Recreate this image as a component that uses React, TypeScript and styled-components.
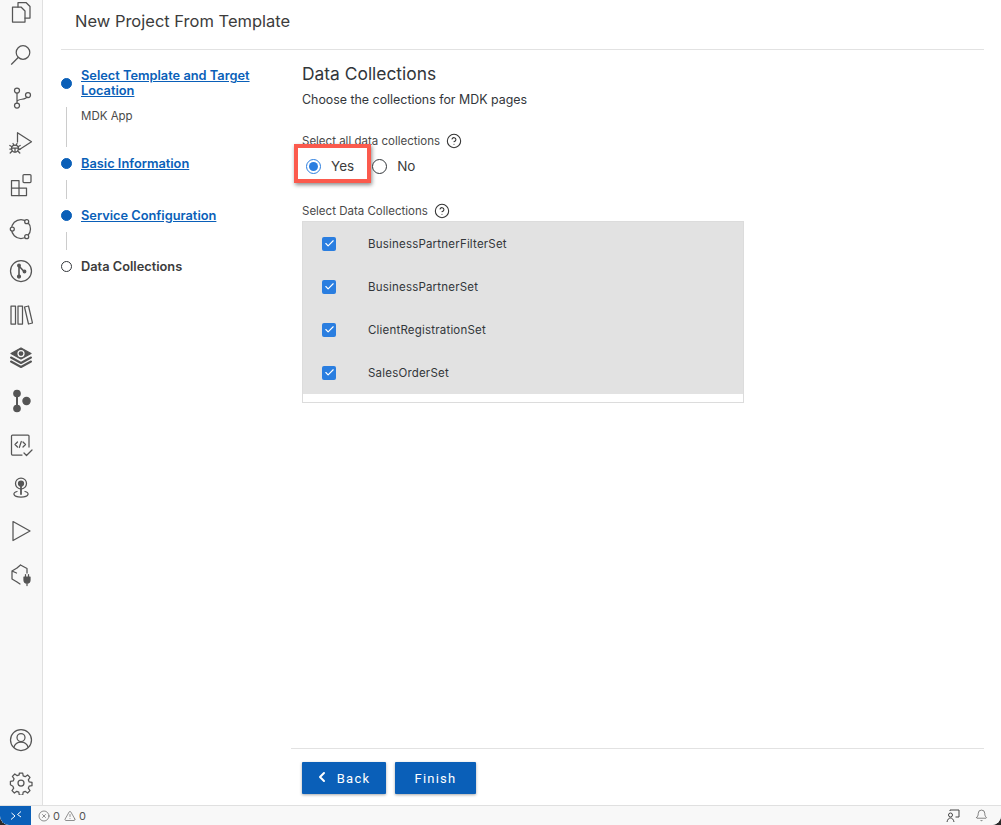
import React from 'react'
import styled, { createGlobalStyle } from 'styled-components'
import { ChevronLeft, Check, Bell, CircleHelp, CircleX, TriangleAlert } from 'lucide-react'

const GlobalStyle = createGlobalStyle`
  html, body {
    margin: 0;
    height: 100%;
    background: #2a2a2a;
  }
  #root { height: 100%; }
  * { box-sizing: border-box; }
`

const Page = styled.div`
  height: 100vh;
  display: flex;
  flex-direction: column;
  background: #fff;
  border-radius: 0 0 9px 9px;
  overflow: hidden;
  font-family: Inter, "Liberation Sans", sans-serif;
  color: #32363a;
`
const Body = styled.div`
  flex: 1;
  display: flex;
  min-height: 0;
`
const ActivityBar = styled.nav`
  width: 43px;
  flex-shrink: 0;
  background: #f8f8f8;
  border-right: 1px solid #e0e0e0;
  display: flex;
  flex-direction: column;
  justify-content: space-between;
  overflow: hidden;
`
const IconGroup = styled.div<{ $shift?: number }>`
  display: flex;
  flex-direction: column;
  margin-top: ${(p) => p.$shift || 0}px;
`
const BarIcon = styled.div`
  height: 43.3px;
  display: flex;
  align-items: center;
  justify-content: center;
  color: #555;

  svg {
    width: 24px;
    height: 24px;
    fill: none;
    stroke: currentColor;
    stroke-width: 1.25;
    stroke-linejoin: round;
    stroke-linecap: round;
  }
`
const Main = styled.main`
  flex: 1;
  min-width: 0;
  display: flex;
  flex-direction: column;
  padding: 0 17px 0 18px;
`
const Header = styled.header`
  height: 50px;
  flex-shrink: 0;
  border-bottom: 1px solid #e2e2e2;
  padding: 12px 0 0 14px;
  font-size: 16.5px;
  line-height: 19px;
  color: #3c3c3c;
`
const Columns = styled.div`
  flex: 1;
  min-height: 0;
  display: flex;
`
const Steps = styled.ol`
  width: 230px;
  flex-shrink: 0;
  margin: 0;
  padding: 18px 22px 0 0;
  list-style: none;
  font-size: 12.8px;
  line-height: 15px;
`
const StepRow = styled.li`
  display: flex;
  align-items: center;
  gap: 9px;
`
const Dot = styled.span<{ $done?: boolean }>`
  width: 11px;
  height: 11px;
  flex-shrink: 0;
  border-radius: 50%;
  background: ${(p) => (p.$done ? '#0a5fb8' : '#fff')};
  border: 1px solid ${(p) => (p.$done ? '#0a5fb8' : '#32363a')};
`
const StepLink = styled.a`
  font-weight: 600;
  color: #0a5fb8;
  text-decoration: underline;
`
const StepCurrent = styled.span`
  font-weight: 600;
  color: #3c3c3c;
`
const Connector = styled.div<{ $height: number }>`
  height: ${(p) => p.$height}px;
  margin: 9px 0 9px 5px;
  padding: 2px 0 0 14px;
  border-left: 1px solid #ccc;
  font-size: 11.5px;
  color: #4a4a4a;
`
const Panel = styled.section`
  flex: 1;
  min-width: 0;
  display: flex;
  flex-direction: column;
`
const PanelBody = styled.div`
  flex: 1;
  padding: 13px 0 0 11px;
`
const Title = styled.h2`
  margin: 0;
  font-size: 17.4px;
  line-height: 22px;
  font-weight: 400;
  color: #32363a;
`
const Subtitle = styled.p`
  margin: 7px 0 0;
  font-size: 12.4px;
  line-height: 15px;
  color: #32363a;
`
const FieldLabel = styled.div<{ $top: number }>`
  display: flex;
  align-items: center;
  gap: 6px;
  margin-top: ${(p) => p.$top}px;
  height: 16px;
  font-size: 11.5px;
  color: #4a4a4a;

  svg {
    width: 16px;
    height: 16px;
    color: #333;
  }
`
const RadioGroup = styled.div`
  display: flex;
  height: 26px;
  margin-top: 4px;
  padding-left: 4px;
  gap: 18px;
  align-items: center;
`
const RadioOption = styled.label`
  position: relative;
  display: flex;
  align-items: center;
  gap: 10px;
  font-size: 13.5px;
  color: #3c3c3c;
`
const RadioMark = styled.span<{ $on?: boolean }>`
  width: 15px;
  height: 15px;
  border-radius: 50%;
  background: #fff;
  border: ${(p) => (p.$on ? '1.5px solid #2a7ee0' : '1.5px solid #32363a')};
  display: flex;
  align-items: center;
  justify-content: center;

  &::after {
    content: '';
    display: ${(p) => (p.$on ? 'block' : 'none')};
    width: 9px;
    height: 9px;
    border-radius: 50%;
    background: #2a7ee0;
  }
`
const Highlight = styled.span`
  position: absolute;
  left: -12px;
  right: -17px;
  top: -14px;
  bottom: -9px;
  border: 4px solid #fb5a4d;
  box-shadow: 1px 2px 4px rgba(0, 0, 0, 0.45);
  pointer-events: none;
`
const ListBox = styled.div`
  width: 442px;
  height: 182px;
  margin-top: 2px;
  border: 1px solid #dcdcdc;
  background: #fff;
`
const ListRow = styled.div`
  height: 43px;
  display: flex;
  align-items: center;
  padding-left: 19px;
  background: #e2e2e2;
  font-size: 11.5px;
  letter-spacing: 0.2px;
  color: #32363a;
`
const CheckMark = styled.span`
  width: 14px;
  height: 14px;
  margin-right: 32px;
  border-radius: 2px;
  background: #2a7ee0;
  color: #fff;
  display: flex;
  align-items: center;
  justify-content: center;
`
const Footer = styled.footer`
  height: 57px;
  flex-shrink: 0;
  border-top: 1px solid #e2e2e2;
  padding: 13px 0 0 11px;
  display: flex;
  align-items: flex-start;
  gap: 9px;
`
const Button = styled.button<{ $width: number }>`
  width: ${(p) => p.$width}px;
  height: 32px;
  border: 0;
  border-radius: 1px;
  background: #0a5fb8;
  color: #fff;
  font-family: Roboto, "Liberation Sans", sans-serif;
  font-size: 13px;
  letter-spacing: 1.2px;
  display: flex;
  align-items: center;
  justify-content: center;
  gap: 7px;
  padding: 0;
  box-shadow: 0 1px 3px rgba(0, 0, 0, 0.35);
`
const BackIcon = styled(ChevronLeft)`
  margin: -3px 0 0 -4px;
`
const StatusBar = styled.footer`
  height: 20px;
  flex-shrink: 0;
  background: #f8f8f8;
  border-top: 1px solid #e0e0e0;
  display: flex;
  align-items: center;
  font-size: 11px;
  color: #555;
`
const RemoteBadge = styled.div`
  width: 31px;
  height: 100%;
  background: #0a5fb8;
  color: #fff;
  display: flex;
  align-items: center;
  justify-content: center;
  margin-right: 7px;
`
const StatusItem = styled.span`
  display: flex;
  align-items: center;
  gap: 3px;
  margin-right: 4px;
`
const StatusRight = styled.div`
  margin-left: auto;
  display: flex;
  align-items: center;
  gap: 15px;
  padding-right: 13px;
  color: #444;
`

const topIcons = [
  <svg viewBox="0 0 24 24"><path d="M9 7V2.500h8L21 6.500v11.500h-5" /><path d="M3.500 7H12l4 4v11H3.500z" /></svg>,
  <svg viewBox="0 0 24 24"><circle cx="14" cy="9.500" r="6.800" /><path d="M9.200 14.500 2.500 21.200" /></svg>,
  <svg viewBox="0 0 24 24"><circle cx="8" cy="4.500" r="2.500" /><circle cx="8" cy="19.500" r="2.500" /><circle cx="19" cy="9" r="2.500" /><path d="M8 7v10M8 15.500c1-3 9-1.500 10-4.500" /></svg>,
  <svg viewBox="0 0 24 24"><path d="M8.500 12V2.700L22.500 11.700 10.500 19.500" /><circle cx="6" cy="18.500" r="3.500" /><path d="M4 13.500l1 2M8 13.500l-1 2M.8 15.500l2.200 1.200M11.200 15.500 9 16.700M.8 19h2M11.200 19h-2M1.200 23l2-2M10.800 23l-2-2M2.800 18h6.400M6 18v4" /></svg>,
  <svg viewBox="0 0 24 24"><path d="M2.500 7.500h7.500V15h7.500v7.500H2.500z" /><path d="M2.500 15H10v7.500" /><rect x="14" y="1.500" width="8" height="8" rx="1" /></svg>,
  <svg viewBox="0 0 24 24"><circle cx="12" cy="13" r="9.500" /><circle cx="17.700" cy="5.700" r="2" fill="#f8f8f8" /><circle cx="3.300" cy="13" r="2" fill="#f8f8f8" /><circle cx="17.700" cy="20.700" r="2" fill="#f8f8f8" /></svg>,
  <svg viewBox="0 0 24 24"><circle cx="12" cy="12" r="10.500" /><path d="M10 7v10M10 7l5 5.500" strokeWidth="1.600" /><circle cx="10" cy="6.500" r="1.300" fill="currentColor" /><circle cx="10" cy="17.500" r="1.500" fill="currentColor" /><circle cx="15.500" cy="12.500" r="1.300" fill="currentColor" /></svg>,
  <svg viewBox="0 0 24 24"><rect x="2" y="3" width="4.500" height="18" /><rect x="9" y="3" width="4.500" height="18" /><path d="M15.500 4 19.500 3 23.500 20 19.500 21z" /></svg>,
  <svg viewBox="0 0 24 24"><path d="M12 2 22 7.500 12 13 2 7.500z" fill="currentColor" /><path d="M2 11.500 12 17l10-5.500M2 15.500 12 21l10-5.500" strokeWidth="2" /><circle cx="12" cy="7.500" r="3" stroke="#f8f8f8" /></svg>,
  <svg viewBox="0 0 24 24"><circle cx="8" cy="4.500" r="3.200" fill="currentColor" /><circle cx="8" cy="19.500" r="3.200" fill="currentColor" /><circle cx="17.500" cy="12" r="3.600" fill="currentColor" /><path d="M8 5v14" strokeWidth="2" /></svg>,
  <svg viewBox="0 0 24 24"><path d="M13 22H3.500a1 1 0 0 1-1-1V3a1 1 0 0 1 1-1H19a1 1 0 0 1 1 1v11" /><path d="M8.500 9 6 11.500 8.500 14M14 9l2.500 2.500L14 14M12.300 8.500l-2 6" /><path d="M15 20l2.500 2.500L23 17" /></svg>,
  <svg viewBox="0 0 24 24"><circle cx="12" cy="7.500" r="5.500" /><circle cx="12" cy="7.500" r="2.500" fill="currentColor" /><path d="M12 10v8" strokeWidth="1.800" /><path d="M8 15.500c-2 .5-3.500 1.500-3 3 .5 1.500 4 2.500 7 2.500s6.500-1 7-2.500c.5-1.500-1-2.500-3-3" /></svg>,
  <svg viewBox="0 0 24 24"><path d="M4 2.500 21 12 4 21.500z" /></svg>,
  <svg viewBox="0 0 24 24"><path d="M11.500 2 18 5.500V10M8 5 11.500 2M8 5 3 8v8l5 3M7.500 10 3 8M11 21l-3-2" /><path d="M15 14h6v3a3 3 0 0 1-6 0zM16.500 11.500V14M19.500 11.500V14M18 20v2.500" fill="currentColor" /></svg>,
]

const bottomIcons = [
  <svg viewBox="0 0 24 24"><circle cx="12" cy="12" r="10.500" /><circle cx="12" cy="9.500" r="4" /><path d="M4.800 19.500c1-3.500 3.500-5.500 7.200-5.500s6.200 2 7.200 5.500" /></svg>,
  <svg viewBox="0 0 24 24"><circle cx="12" cy="12" r="3" /><path d="M10.300 2h3.400l.5 2.900 2 .8 2.400-1.700 2.400 2.400-1.700 2.400.8 2 2.900.5v3.400l-2.900.5-.8 2 1.700 2.400-2.400 2.400-2.400-1.700-2 .8-.5 2.900h-3.400l-.5-2.900-2-.8-2.400 1.700-2.400-2.400 1.700-2.400-.8-2L1.400 13.700v-3.400l2.900-.5.800-2-1.700-2.400 2.400-2.400 2.400 1.700 2-.8z" /></svg>,
]

const collections = ['BusinessPartnerFilterSet', 'BusinessPartnerSet', 'ClientRegistrationSet', 'SalesOrderSet']

const App = () => {
  return (
    <>
      <GlobalStyle />
      <Page>
        <Body>
          <ActivityBar>
            <IconGroup $shift={-10}>
              {topIcons.map((icon, i) => (
                <BarIcon key={i}>{icon}</BarIcon>
              ))}
            </IconGroup>
            <IconGroup>
              {bottomIcons.map((icon, i) => (
                <BarIcon key={i}>{icon}</BarIcon>
              ))}
            </IconGroup>
          </ActivityBar>
          <Main>
            <Header>New Project From Template</Header>
            <Columns>
              <Steps>
                <StepRow>
                  <Dot $done />
                  <StepLink>Select Template and Target Location</StepLink>
                </StepRow>
                <Connector $height={40}>
                  MDK App
                </Connector>
                <StepRow>
                  <Dot $done />
                  <StepLink>Basic Information</StepLink>
                </StepRow>
                <Connector $height={19} />
                <StepRow>
                  <Dot $done />
                  <StepLink>Service Configuration</StepLink>
                </StepRow>
                <Connector $height={18} />
                <StepRow>
                  <Dot />
                  <StepCurrent>Data Collections</StepCurrent>
                </StepRow>
              </Steps>
              <Panel>
                <PanelBody>
                  <Title>Data Collections</Title>
                  <Subtitle>Choose the collections for MDK pages</Subtitle>
                  <FieldLabel $top={26}>
                    Select all data collections
                    <CircleHelp strokeWidth={1.6} />
                  </FieldLabel>
                  <RadioGroup>
                    <RadioOption>
                      <RadioMark $on />
                      Yes
                      <Highlight />
                    </RadioOption>
                    <RadioOption>
                      <RadioMark />
                      No
                    </RadioOption>
                  </RadioGroup>
                  <FieldLabel $top={24}>
                    Select Data Collections
                    <CircleHelp strokeWidth={1.6} />
                  </FieldLabel>
                  <ListBox>
                    {collections.map((name) => (
                      <ListRow key={name}>
                        <CheckMark>
                          <Check size={11} strokeWidth={2.5} />
                        </CheckMark>
                        {name}
                      </ListRow>
                    ))}
                  </ListBox>
                </PanelBody>
                <Footer>
                  <Button $width={84}>
                    <BackIcon size={16} strokeWidth={3} />
                    Back
                  </Button>
                  <Button $width={81}>Finish</Button>
                </Footer>
              </Panel>
            </Columns>
          </Main>
        </Body>
        <StatusBar>
          <RemoteBadge>
            <svg width="12" height="12" viewBox="0 0 12 12" fill="none" stroke="currentColor" strokeWidth="1">
              <path d="M1 9.500 5 6 1.500 3M11 1.500 7.500 4.500 11 7" />
            </svg>
          </RemoteBadge>
          <StatusItem>
            <CircleX size={12} strokeWidth={1.3} />0
          </StatusItem>
          <StatusItem>
            <TriangleAlert size={12} strokeWidth={1.3} />0
          </StatusItem>
          <StatusRight>
            <svg width="14" height="14" viewBox="0 0 14 14" fill="none" stroke="currentColor" strokeWidth="1">
              <circle cx="4.500" cy="6" r="2" />
              <path d="M1 13c.5-2.500 1.700-4 3.500-4S7.500 10.500 8 13M4 2V1h9v7H9.500" />
            </svg>
            <Bell size={13} strokeWidth={1.2} />
          </StatusRight>
        </StatusBar>
      </Page>
    </>
  )
}

export default App
